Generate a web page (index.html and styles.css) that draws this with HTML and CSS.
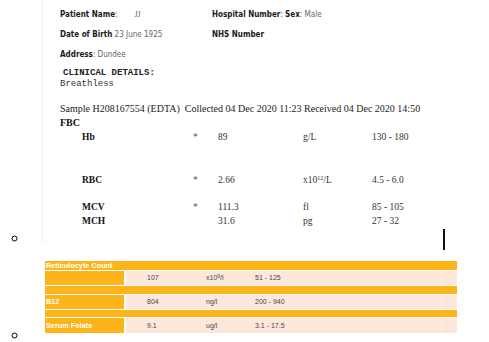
FILE: index.html
```html
<!DOCTYPE html>
<html lang="en">
<head>
<meta charset="utf-8">
<title>Blood results</title>
<link rel="stylesheet" href="styles.css">
</head>
<body>
<ul class="attachments">
<li class="attachment"><div class="report"><div class="info-grid"><div class="info"><b>Patient Name</b>:<span class="val val--name">JJ</span></div><div class="info"><b>Hospital Number</b>: <b>Sex</b>: <span class="val">Male</span></div><div class="info"><b>Date of Birth</b> <span class="val">23 June 1925</span></div><div class="info"><b>NHS Number</b></div><div class="info"><b>Address</b>: <span class="val">Dundee</span></div></div><div class="clinical"><div class="clinical-title">CLINICAL DETAILS:</div><div>Breathless</div></div><div class="sample">Sample H208167554 (EDTA)&nbsp; Collected 04 Dec 2020 11:23 Received 04 Dec 2020 14:50</div><div class="panel-title">FBC</div><div class="fbc"><div class="fbc-row"><span class="fbc-name">Hb</span><span class="fbc-flag">*</span><span>89</span><span>g/L</span><span>130 - 180</span></div><div class="fbc-row fbc-row--far"><span class="fbc-name">RBC</span><span class="fbc-flag">*</span><span>2.66</span><span>x10<sup>12</sup>/L</span><span>4.5 - 6.0</span></div><div class="fbc-row fbc-row--mid"><span class="fbc-name">MCV</span><span class="fbc-flag">*</span><span>111.3</span><span>fl</span><span>85 - 105</span></div><div class="fbc-row"><span class="fbc-name">MCH</span><span class="fbc-flag"></span><span>31.6</span><span>pg</span><span>27 - 32</span></div></div></div><span class="caret"></span></li>
<li class="attachment attachment--table"><div class="results-wrap"><table class="results">
<colgroup><col class="c1"><col class="c2"><col class="c3"><col class="c4"><col class="c5"></colgroup>
<tr class="r-head"><th colspan="5">Reticulocyte Count</th></tr>
<tr class="r-data"><td class="lbl"></td><td>107</td><td>x10<sup>9</sup>/l</td><td>51 - 125</td><td class="end"></td></tr>
<tr class="r-gap r-gap--a"><td colspan="5"></td></tr>
<tr class="r-data"><td class="lbl">B12</td><td>804</td><td>ng/l</td><td>200 - 940</td><td class="end"></td></tr>
<tr class="r-gap r-gap--b"><td colspan="5"></td></tr>
<tr class="r-data r-data--last"><td class="lbl">Serum Folate</td><td>9.1</td><td>ug/l</td><td>3.1 - 17.5</td><td class="end"></td></tr>
</table></div></li>
</ul>
</body>
</html>
```
FILE: styles.css
```css
html, body {
  margin: 0;
  background: #fff;
}
body {
  width: 489px;
  height: 342px;
  overflow: hidden;
}
.attachments {
  margin: 0;
  padding: 0 0 0 28px;
  list-style: circle;
  font: 16px "Liberation Serif", serif;
  color: #000;
}

/* scanned report */
.report {
  display: inline-block;
  overflow: hidden;
  vertical-align: baseline;
  box-sizing: border-box;
  width: 399px;
  height: 243px;
  margin-left: 14px;
  border-left: 1px solid #efefef;
  padding: 4px 0 0 17px;
  font-size: 10px;
  line-height: 12px;
}
.caret {
  display: inline-block;
  width: 2px;
  height: 21px;
  margin-left: 2px;
  background: #111;
  vertical-align: -7px;
}
.info-grid {
  display: grid;
  grid-template-columns: 152px 1fr;
  grid-auto-rows: 20px;
  align-items: center;
  font: 8px "DejaVu Sans Condensed", "DejaVu Sans", sans-serif;
  color: #5a5a5a;
}
.info b {
  color: #1a1a1a;
  font-weight: bold;
}
.val {
  color: #666;
}
.val--name {
  margin-left: 17px;
  font-family: "Liberation Serif", serif;
  font-size: 8px;
}
.clinical {
  margin-top: 4px;
  font: 9px/11px "Liberation Mono", "DejaVu Sans Mono", monospace;
  color: #333;
}
.clinical-title {
  padding-left: 3px;
  font-weight: bold;
  color: #222;
}
.sample {
  margin-top: 13px;
  font: 10px/12px "Liberation Serif", serif;
  color: #222;
  white-space: nowrap;
}
.panel-title {
  margin-top: 2px;
  font: bold 10px/12px "Liberation Serif", serif;
  color: #111;
}
.fbc {
  margin-top: 1px;
  padding-left: 22px;
  font: 9.5px/14px "Liberation Serif", serif;
  color: #333;
}
.fbc-row {
  display: grid;
  grid-template-columns: 111px 25px 85px 69px 1fr;
  height: 14px;
}
.fbc-row--far {
  margin-top: 29px;
}
.fbc-row--mid {
  margin-top: 13px;
}
.fbc-name {
  font-weight: bold;
  color: #111;
}
.fbc-flag {
  color: #555;
}
.fbc sup {
  font-size: 6px;
  line-height: 0;
  vertical-align: 3px;
}

/* results table */
.results-wrap {
  display: inline-block;
  overflow: hidden;
  vertical-align: baseline;
  margin: 11px 0 7px 17px;
}
.results {
  width: 412px;
  table-layout: fixed;
  border-collapse: separate;
  border-spacing: 0;
  font: 7px "Liberation Sans", Arial, sans-serif;
  color: #474747;
}
.c1 { width: 81px; }
.c2 { width: 59px; }
.c3 { width: 49px; }
.c4 { width: 212px; }
.c5 { width: 11px; }
.results th,
.results td {
  padding: 0;
  text-align: left;
  font-weight: normal;
}
.r-head th {
  height: 9px;
  line-height: 9px;
  padding-left: 1px;
  background: #fdb41b;
  color: #fff;
  font-weight: bold;
  font-size: 7.3px;
}
.r-data td {
  height: 14px;
  line-height: 14px;
  padding-left: 21px;
  background: #fee8db;
  border-top: 1px solid #fff;
}
.r-data td.lbl {
  padding-left: 1px;
  background: #fdb41b;
  border-right: 2px solid #fff;
  color: #fff;
  font-weight: bold;
  font-size: 7.3px;
}
.r-data td.end {
  padding: 0;
  border-left: 1px solid #f7e0d2;
}
.r-data--last td {
  height: 15px;
}
.r-gap td {
  height: 8px;
  background: #fdb41b;
  border-top: 1px solid #fff;
}
.r-gap--b td {
  height: 7px;
}
.results sup {
  font-size: 5px;
  line-height: 0;
  vertical-align: 2px;
}
```
